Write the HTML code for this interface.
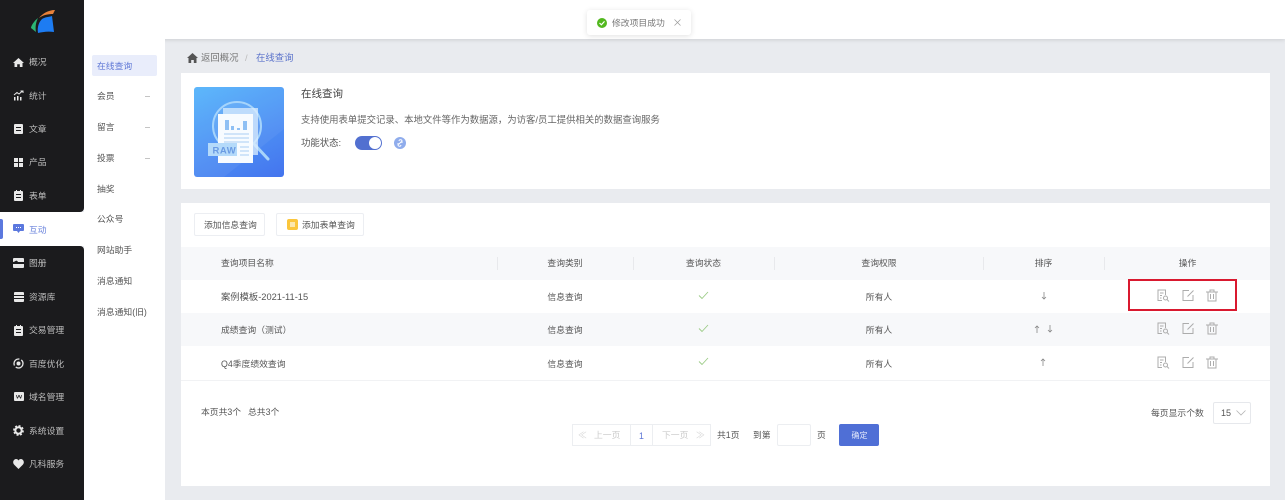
<!DOCTYPE html>
<html lang="zh"><head><meta charset="utf-8"><style>
*{box-sizing:border-box;margin:0;padding:0}
html,body{width:1285px;height:500px;overflow:hidden}
body{position:relative;background:#e9ebef;font-family:"Liberation Sans","Noto Sans CJK SC",sans-serif;font-size:8.8px;color:#555}
.a{position:absolute;white-space:nowrap}
.t{position:absolute;white-space:nowrap;line-height:12px}
.c{transform:translateX(-50%)}
.s{color:#d8d8d8}
svg{position:absolute;display:block}
</style></head><body>
<div class="a" style="left:84px;top:0;width:1201px;height:39px;background:#fff;box-shadow:0 1px 4px rgba(0,0,0,.12)"></div>
<div class="a" style="left:84px;top:39px;width:81px;height:461px;background:#fff"></div>
<div class="a" style="left:0;top:0;width:84px;height:212px;background:#1b1b1d;border-bottom-right-radius:4px"></div>
<div class="a" style="left:0;top:212px;width:84px;height:34px;background:#fff"></div>
<div class="a" style="left:0;top:246px;width:84px;height:254px;background:#1b1b1d;border-top-right-radius:4px"></div>
<div class="a" style="left:0;top:219px;width:3px;height:20px;background:#5b78de;border-radius:0 2px 2px 0"></div>

<svg style="left:30px;top:9px" width="26" height="25" viewBox="0 0 26 25"><path d="M8 9C4 12 1 17 1 19L6 23C5 18 6 13 8 9Z" fill="#2bb673"/><path d="M9 9C12 5 18 1 25 1L23 5C18 5 13 6 9 9Z" fill="#e8813a"/><path d="M12 10C15 8 19 8 22 7L24 23C18 22 12 23 8 24C7 18 9 13 12 10Z" fill="#1d7cf2"/></svg>

<!-- Sidebar icons and labels -->
<svg style="left:13px;top:57px" width="11" height="11" viewBox="0 0 11 11"><path d="M5.500 1L11 6H9.500V10H6.800V7.200H4.200V10H1.500V6H0Z" fill="#e8e8e8"/></svg>
<div class="t" style="left:29px;top:56px;color:#bdbdbd">概况</div>
<svg style="left:13px;top:90px" width="11" height="11" viewBox="0 0 11 11"><path d="M1 5L4 2.500 6 4 9.500 1M7.500 1H10V3" fill="none" stroke="#e8e8e8" stroke-width="1"/><path d="M1 7H2.500V10.500H1ZM4 6H5.500V10.500H4ZM7 7H8.500V10.500H7Z" fill="#e8e8e8"/></svg>
<div class="t" style="left:29px;top:90px;color:#bdbdbd">统计</div>
<svg style="left:14px;top:124px" width="9" height="10" viewBox="0 0 9 10"><path fill-rule="evenodd" d="M1 0H8Q9 0 9 1V9Q9 10 8 10H1Q0 10 0 9V1Q0 0 1 0ZM2 3V4H7V3ZM2 6V7H7V6Z" fill="#e8e8e8"/></svg>
<div class="t" style="left:29px;top:123px;color:#bdbdbd">文章</div>
<svg style="left:14px;top:158px" width="9" height="9" viewBox="0 0 9 9"><path d="M0 0H4V4H0ZM5 0H9V4H5ZM0 5H4V9H0ZM5 5H9V9H5Z" fill="#e8e8e8"/></svg>
<div class="t" style="left:29px;top:156px;color:#bdbdbd">产品</div>
<svg style="left:14px;top:190px" width="9" height="11" viewBox="0 0 9 11"><path fill-rule="evenodd" d="M2 0H3V1H6V0H7V1H8Q9 1 9 2V10Q9 11 8 11H1Q0 11 0 10V2Q0 1 1 1H2ZM2 4V5H7V4ZM2 7V8H7V7Z" fill="#e8e8e8"/></svg>
<div class="t" style="left:29px;top:190px;color:#bdbdbd">表单</div>
<svg style="left:13px;top:224px" width="11" height="10" viewBox="0 0 11 10"><path d="M1 0H10Q11 0 11 1V6Q11 7 10 7H7L5.500 9 4 7H1Q0 7 0 6V1Q0 0 1 0Z" fill="#5b78de"/><path d="M3 3H4V4H3ZM5 3H6V4H5ZM7 3H8V4H7Z" fill="#fff"/></svg>
<div class="t" style="left:29px;top:224px;color:#6a83dc">互动</div>
<svg style="left:13px;top:258px" width="11" height="10" viewBox="0 0 11 10"><path d="M1 0H10Q11 0 11 1V4H5Q4 2 2.500 3T0 4V1Q0 0 1 0ZM0 6H11V9Q11 10 10 10H1Q0 10 0 9Z" fill="#e8e8e8"/></svg>
<div class="t" style="left:29px;top:257px;color:#bdbdbd">图册</div>
<svg style="left:14px;top:292px" width="10" height="10" viewBox="0 0 10 10"><path d="M1 0H9Q10 0 10 1V3H0V1Q0 0 1 0ZM0 4H10V6H0ZM0 7H10V9Q10 10 9 10H1Q0 10 0 9Z" fill="#e8e8e8"/></svg>
<div class="t" style="left:29px;top:291px;color:#bdbdbd">资源库</div>
<svg style="left:14px;top:325px" width="9" height="11" viewBox="0 0 9 11"><path fill-rule="evenodd" d="M2 0H3V1H6V0H7V1H8Q9 1 9 2V10Q9 11 8 11H1Q0 11 0 10V2Q0 1 1 1H2ZM2 4V5H7V4ZM2 7V8H7V7Z" fill="#e8e8e8"/></svg>
<div class="t" style="left:29px;top:324px;color:#bdbdbd">交易管理</div>
<svg style="left:13px;top:358px" width="11" height="11" viewBox="0 0 11 11"><circle cx="5.500" cy="5.500" r="4.500" fill="none" stroke="#e8e8e8" stroke-width="1.300" stroke-dasharray="10 2"/><circle cx="5.500" cy="5.500" r="2" fill="#e8e8e8"/></svg>
<div class="t" style="left:29px;top:358px;color:#bdbdbd">百度优化</div>
<svg style="left:14px;top:392px" width="10" height="9" viewBox="0 0 10 9"><path fill-rule="evenodd" d="M1 0H9Q10 0 10 1V8Q10 9 9 9H1Q0 9 0 8V1Q0 0 1 0ZM2 3L3 6.500H3.800L5 4 6.200 6.500H7L8 3H7.300L6.600 5.500 5.400 3H4.600L3.400 5.500 2.700 3Z" fill="#e8e8e8"/></svg>
<div class="t" style="left:29px;top:391px;color:#bdbdbd">域名管理</div>
<svg style="left:13px;top:425px" width="11" height="11" viewBox="0 0 11 11"><circle cx="5.500" cy="5.500" r="3.200" fill="none" stroke="#e8e8e8" stroke-width="2"/><circle cx="5.500" cy="5.500" r="4.600" fill="none" stroke="#e8e8e8" stroke-width="1.600" stroke-dasharray="2 1.600"/></svg>
<div class="t" style="left:29px;top:425px;color:#bdbdbd">系统设置</div>
<svg style="left:13px;top:459px" width="11" height="10" viewBox="0 0 11 10"><path d="M5.500 10L1 5.500C-1 3 1 0 3 0 4.200 0 5 .6 5.500 1.500 6 .6 6.800 0 8 0 10 0 12 3 10 5.500Z" fill="#e8e8e8"/></svg>
<div class="t" style="left:29px;top:458px;color:#bdbdbd">凡科服务</div>

<!-- Secondary navigation -->
<div class="a" style="left:92px;top:55px;width:65px;height:21px;background:#e9edfb;border-radius:2px"></div>
<div class="t" style="left:97px;top:60px;color:#5f78d6">在线查询</div>
<div class="t" style="left:97px;top:90px">会员</div><div class="a" style="left:145px;top:96px;width:5px;height:1px;background:#c4c4c4"></div>
<div class="t" style="left:97px;top:121px">留言</div><div class="a" style="left:145px;top:127px;width:5px;height:1px;background:#c4c4c4"></div>
<div class="t" style="left:97px;top:152px">投票</div><div class="a" style="left:145px;top:158px;width:5px;height:1px;background:#c4c4c4"></div>
<div class="t" style="left:97px;top:183px">抽奖</div>
<div class="t" style="left:97px;top:213px">公众号</div>
<div class="t" style="left:97px;top:244px">网站助手</div>
<div class="t" style="left:97px;top:275px">消息通知</div>
<div class="t" style="left:97px;top:306px">消息通知(旧)</div>

<!-- Toast -->
<div class="a" style="left:587px;top:10px;width:104px;height:25px;background:#fff;border-radius:3px;box-shadow:0 1px 6px rgba(0,0,0,.12)"></div>
<svg style="left:597px;top:18px" width="10" height="10" viewBox="0 0 10 10"><circle cx="5" cy="5" r="5" fill="#52b81e"/><path d="M2.500 5L4.400 6.800 7.500 3.400" fill="none" stroke="#fff" stroke-width="1.200"/></svg>
<div class="t" style="left:612px;top:17px;color:#777">修改项目成功</div>
<svg style="left:674px;top:19px" width="7" height="7" viewBox="0 0 7 7"><path d="M.5 .5L6.500 6.500M6.500 .5L.5 6.500" stroke="#999" stroke-width=".7"/></svg>

<!-- Breadcrumb -->
<svg style="left:187px;top:53px" width="11" height="10" viewBox="0 0 11 10"><path d="M5.500 0L11 5H9.500V10H6.800V7H4.200V10H1.500V5H0Z" fill="#555"/></svg>
<div class="t" style="left:201px;top:52px;color:#777;font-size:9.400px">返回概况</div>
<div class="t" style="left:245px;top:52px;color:#bbb;font-size:9.400px">/</div>
<div class="t" style="left:256px;top:52px;color:#5b73cb;font-size:9.400px">在线查询</div>

<!-- Card 1 -->
<div class="a" style="left:181px;top:73px;width:1089px;height:116px;background:#fff"></div>
<div class="a" style="left:194px;top:87px;width:90px;height:90px;border-radius:3px;background:linear-gradient(155deg,#55b4fb 0%,#4d90f4 55%,#4474ee 100%);overflow:hidden"></div>
<svg style="left:194px;top:87px" width="90" height="90" viewBox="0 0 90 90"><path d="M3 0H87Q90 0 90 3V42L30 90H3Q0 90 0 87V3Q0 0 3 0Z" fill="#fff" opacity=".05"/><circle cx="43" cy="39" r="24" fill="#fff" fill-opacity=".08" stroke="#a5d4fb" stroke-width="2"/><path d="M61 58L74 72" stroke="#a8d4fa" stroke-width="3" stroke-linecap="round"/><rect x="29" y="21" width="35" height="47" fill="#dceefd" opacity=".75"/><rect x="24" y="27" width="35" height="49" fill="#f7fbff"/><path d="M31 33H35V43H31ZM37 39H40V43H37ZM43 41H46V43H43ZM49 34H53V43H49Z" fill="#8fc0f4"/><path d="M30 47H55M30 51H55M30 55H55M46 60H55M46 64H55M46 68H55" stroke="#a9cdf3" stroke-width="1"/><rect x="14" y="56" width="29" height="13" fill="#b4dafa"/><text x="18.500" y="66.500" font-family="Liberation Sans" font-size="9.500" font-weight="700" fill="#6a9be3" letter-spacing=".5">RAW</text></svg>
<div class="t" style="left:301px;top:88px;font-size:10.500px;color:#444">在线查询</div>
<div class="t" style="left:301px;top:114px;color:#666;font-size:9.400px">支持使用表单提交记录、本地文件等作为数据源，为访客/员工提供相关的数据查询服务</div>
<div class="t" style="left:301px;top:137px;color:#555;font-size:9.400px">功能状态:</div>
<div class="a" style="left:355px;top:136px;width:27px;height:14px;border-radius:7px;background:#5270d0"></div>
<div class="a" style="left:369px;top:137px;width:12px;height:12px;border-radius:50%;background:#fff"></div>
<svg style="left:394px;top:137px" width="12" height="12" viewBox="0 0 12 12"><circle cx="6" cy="6" r="6" fill="#8facec"/><path d="M4.500 7.500L7.500 4.500M5 4A1.500 1.500 0 0 1 8 4.500V6M7 8A1.500 1.500 0 0 1 4 7.500V6" fill="none" stroke="#fff" stroke-width=".9"/></svg>

<!-- Card 2 -->
<div class="a" style="left:181px;top:203px;width:1089px;height:283px;background:#fff"></div>
<div class="a" style="left:194px;top:213px;width:71px;height:23px;border:1px solid #eceef2;border-radius:2px"></div>
<div class="t" style="left:204px;top:219px">添加信息查询</div>
<div class="a" style="left:276px;top:213px;width:88px;height:23px;border:1px solid #eceef2;border-radius:2px"></div>
<div class="a" style="left:287px;top:219px;width:11px;height:11px;background:#fbc63c;border-radius:2px"></div>
<div class="a" style="left:290px;top:222px;width:5px;height:5px;background:#fbe7ae"></div>
<div class="t" style="left:302px;top:219px">添加表单查询</div>

<div class="a" style="left:181px;top:247px;width:1089px;height:33px;background:#f7f8fa"></div>
<div class="a" style="left:181px;top:313px;width:1089px;height:33px;background:#f7f8fa"></div>
<div class="a" style="left:181px;top:380px;width:1089px;height:1px;background:#f1f2f4"></div>
<div class="a" style="left:497px;top:257px;width:1px;height:13px;background:#e8e9ec"></div>
<div class="a" style="left:633px;top:257px;width:1px;height:13px;background:#e8e9ec"></div>
<div class="a" style="left:774px;top:257px;width:1px;height:13px;background:#e8e9ec"></div>
<div class="a" style="left:983px;top:257px;width:1px;height:13px;background:#e8e9ec"></div>
<div class="a" style="left:1104px;top:257px;width:1px;height:13px;background:#e8e9ec"></div>

<div class="t" style="left:221px;top:257px">查询项目名称</div>
<div class="t c" style="left:565px;top:257px">查询类别</div>
<div class="t c" style="left:703.500px;top:257px">查询状态</div>
<div class="t c" style="left:879px;top:257px">查询权限</div>
<div class="t c" style="left:1043.500px;top:257px">排序</div>
<div class="t c" style="left:1187.500px;top:257px">操作</div>

<div class="t" style="left:221px;top:291px;font-size:9.300px">案例模板-2021-11-15</div>
<div class="t" style="left:221px;top:324px">成绩查询（测试）</div>
<div class="t" style="left:221px;top:358px">Q4季度绩效查询</div>
<div class="t c" style="left:565px;top:291px">信息查询</div><div class="t c" style="left:565px;top:324px">信息查询</div><div class="t c" style="left:565px;top:358px">信息查询</div>
<div class="t c" style="left:879px;top:291px">所有人</div><div class="t c" style="left:879px;top:324px">所有人</div><div class="t c" style="left:879px;top:358px">所有人</div>

<svg style="left:698px;top:291px" width="11" height="9" viewBox="0 0 11 9"><path d="M1 4.500L4 7.500 10 1" fill="none" stroke="#9bcb85" stroke-width=".9"/></svg>
<svg style="left:698px;top:324px" width="11" height="9" viewBox="0 0 11 9"><path d="M1 4.500L4 7.500 10 1" fill="none" stroke="#9bcb85" stroke-width=".9"/></svg>
<svg style="left:698px;top:357px" width="11" height="9" viewBox="0 0 11 9"><path d="M1 4.500L4 7.500 10 1" fill="none" stroke="#9bcb85" stroke-width=".9"/></svg>

<svg style="left:1041px;top:292px" width="6" height="8" viewBox="0 0 6 8"><path d="M3 0V7M1 5L3 7 5 5" fill="none" stroke="#888" stroke-width=".8"/></svg>
<svg style="left:1034px;top:325px" width="6" height="8" viewBox="0 0 6 8"><path d="M3 8V1M1 3L3 1 5 3" fill="none" stroke="#888" stroke-width=".8"/></svg>
<svg style="left:1047px;top:325px" width="6" height="8" viewBox="0 0 6 8"><path d="M3 0V7M1 5L3 7 5 5" fill="none" stroke="#888" stroke-width=".8"/></svg>
<svg style="left:1040px;top:358px" width="6" height="8" viewBox="0 0 6 8"><path d="M3 8V1M1 3L3 1 5 3" fill="none" stroke="#888" stroke-width=".8"/></svg>

<!-- Row action icons -->
<svg style="left:1157px;top:289px" width="13" height="13" viewBox="0 0 13 13"><path d="M8.500 6V1H1V11.500H5M3 4H6.500M3 6.500H5M3 9H4.500" fill="none" stroke="#acacac"/><circle cx="8.500" cy="9" r="2" fill="none" stroke="#acacac"/><path d="M10 10.500L12 12.500" stroke="#acacac"/></svg>
<svg style="left:1182px;top:289px" width="13" height="13" viewBox="0 0 13 13"><path d="M7 1.500H1V11.500H11V6M5.500 7.500L11.500 1.500" fill="none" stroke="#acacac"/></svg>
<svg style="left:1206px;top:289px" width="12" height="13" viewBox="0 0 12 13"><path d="M0 3H12M4 3V1H8V3M2 3V12H10V3M4.500 5V10M7.500 5V10" fill="none" stroke="#acacac"/></svg>
<svg style="left:1157px;top:322px" width="13" height="13" viewBox="0 0 13 13"><path d="M8.500 6V1H1V11.500H5M3 4H6.500M3 6.500H5M3 9H4.500" fill="none" stroke="#acacac"/><circle cx="8.500" cy="9" r="2" fill="none" stroke="#acacac"/><path d="M10 10.500L12 12.500" stroke="#acacac"/></svg>
<svg style="left:1182px;top:322px" width="13" height="13" viewBox="0 0 13 13"><path d="M7 1.500H1V11.500H11V6M5.500 7.500L11.500 1.500" fill="none" stroke="#acacac"/></svg>
<svg style="left:1206px;top:322px" width="12" height="13" viewBox="0 0 12 13"><path d="M0 3H12M4 3V1H8V3M2 3V12H10V3M4.500 5V10M7.500 5V10" fill="none" stroke="#acacac"/></svg>
<svg style="left:1157px;top:356px" width="13" height="13" viewBox="0 0 13 13"><path d="M8.500 6V1H1V11.500H5M3 4H6.500M3 6.500H5M3 9H4.500" fill="none" stroke="#acacac"/><circle cx="8.500" cy="9" r="2" fill="none" stroke="#acacac"/><path d="M10 10.500L12 12.500" stroke="#acacac"/></svg>
<svg style="left:1182px;top:356px" width="13" height="13" viewBox="0 0 13 13"><path d="M7 1.500H1V11.500H11V6M5.500 7.500L11.500 1.500" fill="none" stroke="#acacac"/></svg>
<svg style="left:1206px;top:356px" width="12" height="13" viewBox="0 0 12 13"><path d="M0 3H12M4 3V1H8V3M2 3V12H10V3M4.500 5V10M7.500 5V10" fill="none" stroke="#acacac"/></svg>
<div class="a" style="left:1128px;top:279px;width:109px;height:32px;border:2px solid #d9192f"></div>

<!-- Footer and pagination -->
<div class="t" style="left:201px;top:406px">本页共3个</div>
<div class="t" style="left:248px;top:406px">总共3个</div>
<div class="t" style="left:1151px;top:407px">每页显示个数</div>
<div class="a" style="left:1213px;top:402px;width:38px;height:22px;border:1px solid #e6e8ec;border-radius:2px"></div>
<div class="t" style="left:1221px;top:407px;font-size:9px">15</div>
<svg style="left:1236px;top:410px" width="10" height="6" viewBox="0 0 10 6"><path d="M.5 .5L5 5 9.500 .5" fill="none" stroke="#b5b5b5" stroke-width=".8"/></svg>

<div class="a" style="left:572px;top:424px;width:139px;height:22px;border:1px solid #eceef1"></div>
<div class="a" style="left:630px;top:424px;width:1px;height:22px;background:#eceef1"></div>
<div class="a" style="left:652px;top:424px;width:1px;height:22px;background:#eceef1"></div>
<div class="t s" style="left:578px;top:429px">≪</div>
<div class="t" style="left:594px;top:429px;color:#ccc">上一页</div>
<div class="t c" style="left:641.500px;top:430px;color:#5f78d6">1</div>
<div class="t" style="left:662px;top:429px;color:#ccc">下一页</div>
<div class="t s" style="left:696px;top:429px">≫</div>
<div class="t" style="left:717px;top:429px">共1页</div>
<div class="t" style="left:753px;top:429px">到第</div>
<div class="a" style="left:777px;top:424px;width:34px;height:22px;border:1px solid #eceef1;border-radius:2px"></div>
<div class="t" style="left:817px;top:429px">页</div>
<div class="a" style="left:839px;top:424px;width:40px;height:22px;background:#4f6fd6;border-radius:2px"></div>
<div class="t c" style="left:859.500px;top:430px;color:#dfe6fa;font-size:8px">确定</div>
</body></html>
